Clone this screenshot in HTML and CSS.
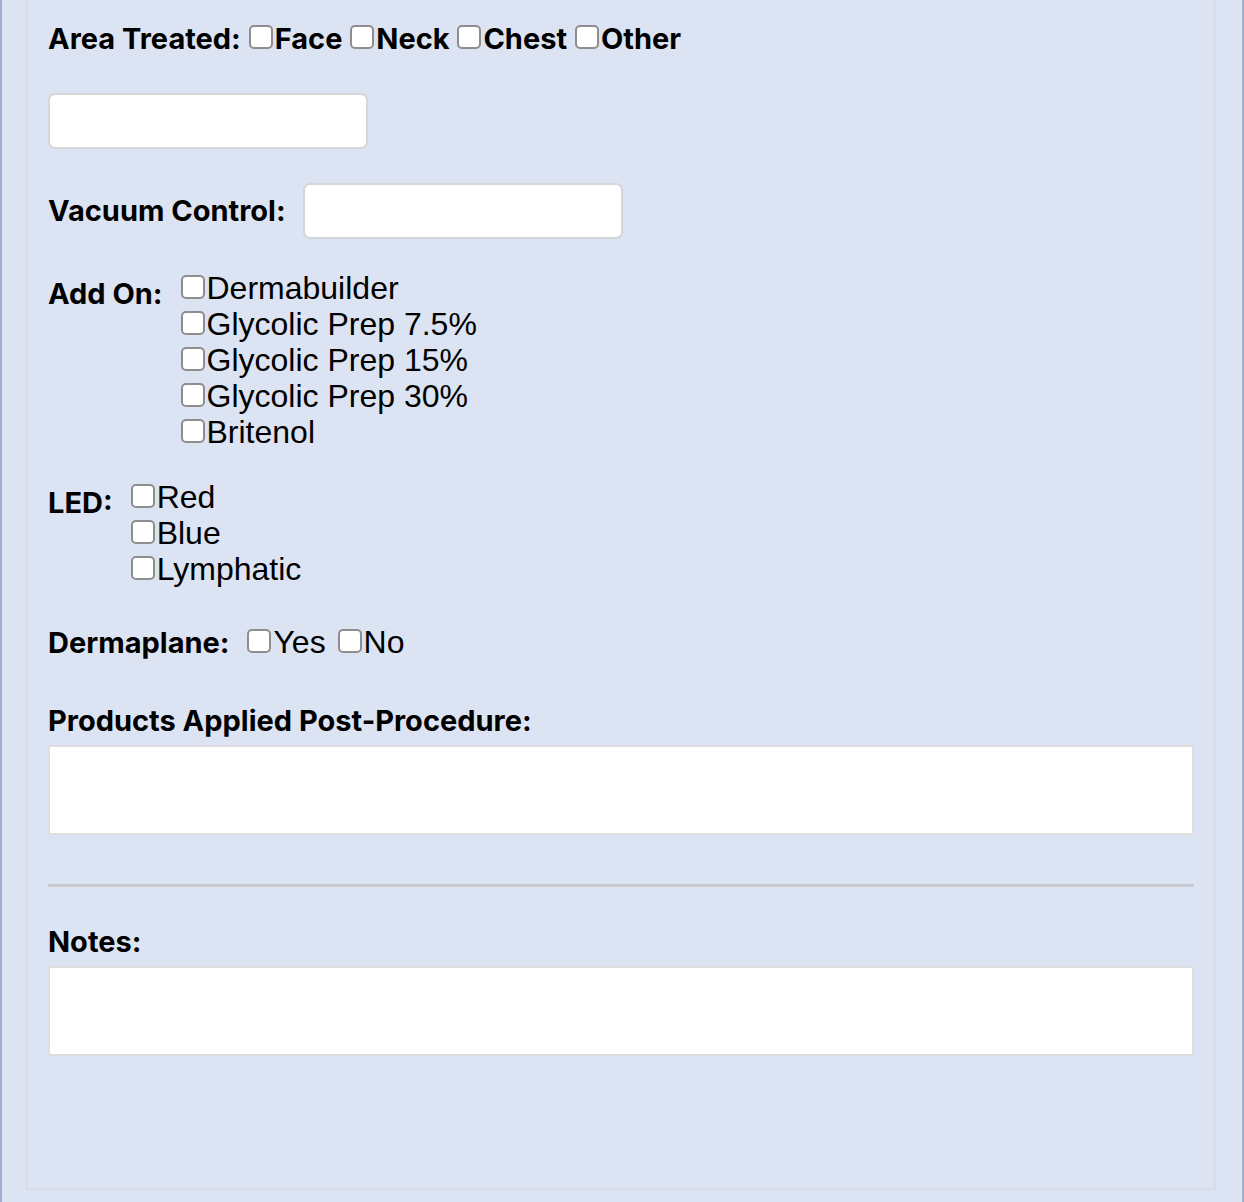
FILE: index.html
```html
<!DOCTYPE html>
<html lang="en">
<head>
    <meta charset="UTF-8">
    <meta name="viewport" content="width=device-width, initial-scale=1.0">
    <title>Treatment Record</title>
    <link rel="stylesheet" href="styles.css">
</head>
<body>
    <div class="form-box">
        <!-- Area treated -->
        <div class="check-line">
            <span class="label">Area Treated:</span>
            <input type="checkbox" id="area-face"><label for="area-face">Face</label>
            <input type="checkbox" id="area-neck"><label for="area-neck">Neck</label>
            <input type="checkbox" id="area-chest"><label for="area-chest">Chest</label>
            <input type="checkbox" id="area-other"><label for="area-other">Other</label>
        </div>
        <input type="text" class="text-field area-other-text" id="area-other-text">

        <div class="field-row vacuum">
            <label class="label" for="vacuum">Vacuum Control:</label>
            <input type="text" class="text-field" id="vacuum">
        </div>

        <!-- Add ons -->
        <div class="group-row addon">
            <span class="label">Add On:</span>
            <div class="options">
                <div><input type="checkbox" id="add1"><label for="add1">Dermabuilder</label></div>
                <div><input type="checkbox" id="add2"><label for="add2">Glycolic Prep 7.5%</label></div>
                <div><input type="checkbox" id="add3"><label for="add3">Glycolic Prep 15%</label></div>
                <div><input type="checkbox" id="add4"><label for="add4">Glycolic Prep 30%</label></div>
                <div><input type="checkbox" id="add5"><label for="add5">Britenol</label></div>
            </div>
        </div>

        <div class="group-row led">
            <span class="label">LED:</span>
            <div class="options">
                <div><input type="checkbox" id="led1"><label for="led1">Red</label></div>
                <div><input type="checkbox" id="led2"><label for="led2">Blue</label></div>
                <div><input type="checkbox" id="led3"><label for="led3">Lymphatic</label></div>
            </div>
        </div>

        <div class="plain-line dermaplane">
            <span class="label">Dermaplane:</span>
            <input type="checkbox" id="derm-yes"><label for="derm-yes">Yes</label>
            <input type="checkbox" id="derm-no"><label for="derm-no">No</label>
        </div>

        <label class="label block products" for="products">Products Applied Post-Procedure:</label>
        <textarea id="products" class="text-box"></textarea>

        <hr class="divider">

        <label class="label block notes" for="notes">Notes:</label>
        <textarea id="notes" class="text-box"></textarea>
    </div>
</body>
</html>
```

FILE: styles.css
```css
body {
    margin: 0;
    padding: 0 0 14px 0;
    background: #dce3f2;
    border-left: 2px solid #a3adcf;
    border-right: 2px solid #a3adcf;
    color: #000;
    font-family: "Liberation Sans", Arial, sans-serif;
    font-size: 32px;
}
.form-box {
    display: flex;
    flex-direction: column;
    align-items: flex-start;
    margin: 0 26px 0 24px;
    padding: 21px 20px 132px 20px;
    border: 2px solid #d9dce3;
    border-top: none;
}
.label {
    font-family: Inter, "Liberation Sans", sans-serif;
    font-weight: 700;
    font-size: 29px;
    line-height: 36px;
}
input[type="checkbox"] {
    appearance: none;
    -webkit-appearance: none;
    width: 24px;
    height: 24px;
    margin: 0 2px 0 3px;
    border: 2px solid #8e8e8e;
    border-radius: 5px;
    background: #fff;
    box-sizing: border-box;
}
.check-line {
    font-family: Inter, "Liberation Sans", sans-serif;
    font-weight: 700;
    font-size: 29px;
    line-height: 36px;
    white-space: nowrap;
}
.check-line input[type="checkbox"] {
    margin-left: 1px;
}
.text-field {
    width: 320px;
    height: 56px;
    margin: 0;
    padding: 0 12px;
    border: 2px solid #d4d6da;
    border-radius: 7px;
    background: #fff;
    box-sizing: border-box;
    font-size: 28px;
}
.area-other-text {
    margin-top: 36px;
}
.field-row {
    display: flex;
    align-items: center;
    gap: 17px;
}
.vacuum {
    margin-top: 34px;
}
.group-row {
    display: flex;
    align-items: flex-start;
    line-height: 36px;
}
.group-row .label {
    margin-top: 6px;
    margin-right: 15px;
}
.group-row .options input[type="checkbox"] {
    margin-left: 3px;
}
.addon {
    margin-top: 31px;
}
.led {
    margin-top: 29px;
}
.plain-line {
    line-height: 36px;
    white-space: nowrap;
}
.plain-line .label {
    margin-right: 6px;
}
.dermaplane {
    margin-top: 37px;
}
.block {
    display: block;
}
.products {
    margin-top: 42px;
}
.notes {
    margin-top: 37px;
}
.text-box {
    display: block;
    width: 100%;
    height: 90px;
    margin: 6px 0 0 0;
    border: 2px solid #dedede;
    border-radius: 0;
    background: #fff;
    box-sizing: border-box;
    resize: none;
    font-family: "Liberation Sans", Arial, sans-serif;
    font-size: 28px;
}
.divider {
    width: 100%;
    height: 3px;
    margin: 49px 0 0 0;
    border: none;
    background: #c9cacf;
}
```
